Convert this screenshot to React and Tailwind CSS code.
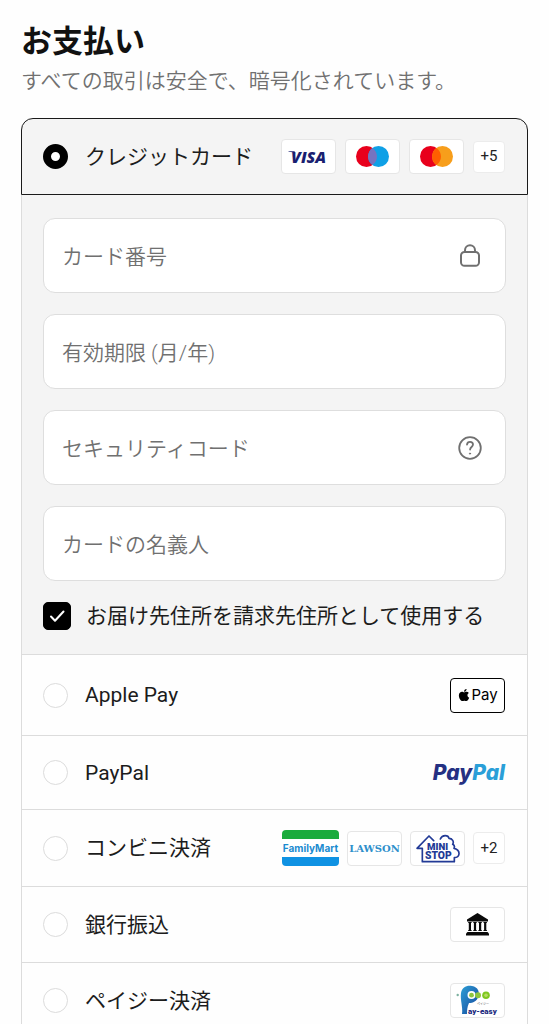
import { useState } from "react";
import { FaApple } from "react-icons/fa";

function LockIcon() {
    return (
        <svg className="size-6 shrink-0 text-[#707070]" viewBox="0 0 24 24" fill="none" stroke="currentColor" strokeWidth="2" aria-hidden="true">
            <rect x="3" y="8" width="18" height="13.800" rx="3.600" />
            <path d="M7 8V6.200a5 5 0 0 1 10 0v1.800" />
        </svg>
    );
}

function HelpIcon() {
    return (
        <svg className="size-6" viewBox="0 0 24 24" fill="none" stroke="currentColor" strokeWidth="1.8" strokeLinecap="round" aria-hidden="true">
            <circle cx="12" cy="12" r="10.800" />
            <path d="M9 8.600c.2-1.600 1.400-2.700 3-2.700s3 1 3 2.700c0 2.300-2.900 2.400-2.900 4.800v.2" />
            <circle cx="12" cy="17.600" r=".6" fill="currentColor" strokeWidth="1" />
        </svg>
    );
}

// white box that holds a logo
function Badge({ children }) {
    return (
        <span className="flex h-[35px] w-[55px] items-center justify-center rounded-[4px] border border-[#e6e6e6] bg-white">
            {children}
        </span>
    );
}

function MoreBadge({ count }) {
    return (
        <span className="flex h-8 w-8 items-center justify-center rounded-[4px] border border-[#ececec] bg-white text-[15px] text-[#222]">
            +{count}
        </span>
    );
}

function VisaLogo() {
    return (
        <Badge>
            <svg width="49" height="28" viewBox="0 0 49 28" role="img" aria-label="Visa">
                <text x="7" y="20" fontFamily="Open Sans, sans-serif" fontSize="16" fontWeight="800" fontStyle="italic" fill="#1a1f71">VISA</text>
                <path d="M4.500 8.300h6l1 2.200C9.500 9.200 7.500 8.800 4.500 8.700z" fill="#1a1f71" />
            </svg>
        </Badge>
    );
}

function CirclesLogo({ name, right, overlap }) {
    return (
        <Badge>
            <svg width="33" height="21" viewBox="0 0 33 21" role="img" aria-label={name}>
                <circle cx="10.5" cy="10.5" r="10.5" fill="#e8001c" />
                <circle cx="22.5" cy="10.5" r="10.5" fill={right} />
                <path d="M16.5 1.900a10.5 10.5 0 0 1 0 17.200a10.5 10.5 0 0 1 0-17.200z" fill={overlap} />
            </svg>
        </Badge>
    );
}

function ApplePayLogo() {
    return (
        <span className="flex h-[35px] w-[55px] items-center justify-center rounded-[4px] border border-black bg-white font-[Inter] text-black">
            <FaApple className="size-[14px]" />
            <span className="text-[15px]">Pay</span>
        </span>
    );
}

function PayPalLogo() {
    return (
        <span className="font-[Inter] text-[21px] font-extrabold italic text-[#253082]">
            Pay<span className="text-[#2a9fd8]">Pal</span>
        </span>
    );
}

function FamilyMartLogo() {
    return (
        <span className="flex h-9 w-[57px] flex-col items-center justify-between overflow-hidden rounded-[4px] bg-white">
            <span className="h-[9px] w-full bg-[#1aab3c]"></span>
            <span className="font-[Inter] text-[10px]/[16px] font-bold text-[#1a8bd0]">FamilyMart</span>
            <span className="h-[9px] w-full bg-[#0f92e3]"></span>
        </span>
    );
}

function LawsonLogo() {
    return (
        <Badge>
            <span className="font-['DejaVu_Serif'] text-[10px] font-bold text-[#2e8fcb]">LAWSON</span>
        </Badge>
    );
}

function MiniStopLogo() {
    return (
        <Badge>
            <svg width="44" height="29" viewBox="-1 -1 132 87" role="img" aria-label="Mini Stop">
                <path d="M16 42H2L38 5l14 14M72 14C78 0 96 2 98 12c10 0 16 10 11 18c6 3 6 8 4 12c8 1 16 8 15 17c-1 7-7 11-14 11v12H18V42" fill="none" stroke="#223a96" strokeWidth="5" strokeLinejoin="round" strokeLinecap="round" />
                <text x="64" y="46" textAnchor="middle" fontFamily="Roboto, sans-serif" fontSize="29" fontWeight="900" fill="#223a96">MINI</text>
                <text x="66" y="74" textAnchor="middle" fontFamily="Roboto, sans-serif" fontSize="31" fontWeight="900" fill="#223a96">STOP</text>
            </svg>
        </Badge>
    );
}

function BankLogo() {
    return (
        <Badge>
            <svg width="23" height="23" viewBox="0 0 23 23" fill="#0a0a0a" aria-hidden="true">
                <path d="M11.500 0L22 6.500V8.500H1V6.500z" />
                <path d="M2.200 9h3.400v1H5v7h.6v1H2.200v-1h.6v-7h-.6zM7.300 9h3.400v1h-.6v7h.6v1H7.300v-1h.6v-7h-.6zM12.400 9h3.400v1h-.6v7h.6v1h-3.400v-1h.6v-7h-.6zM17.500 9h3.400v1h-.6v7h.6v1h-3.400v-1h.6v-7h-.6z" />
                <path d="M1.500 19h20l1.500 1.500v2H0v-2z" />
            </svg>
        </Badge>
    );
}

function PayEasyLogo() {
    return (
        <Badge>
            <svg width="45" height="33" viewBox="-1 -1 45 33" role="img" aria-label="Pay-easy">
                <defs>
                    <linearGradient id="payEasyBlue" x1="0" y1="0" x2="1" y2="1">
                        <stop offset="0" stopColor="#2d9fd6" />
                        <stop offset="1" stopColor="#16459b" />
                    </linearGradient>
                </defs>
                {/* swoosh behind the green dots */}
                <path d="M6 29C7 22 4 15 5 8C6 2 11 0 16 1c6 1 8 6 6 11c-1 4-5 6-9 6c-2 4-2 8-2 11z" fill="url(#payEasyBlue)" />
                <circle cx="15.500" cy="10" r="4" fill="#fff" />
                <circle cx="1.700" cy="10" r="1.200" fill="#7db1a0" />
                <circle cx="15.500" cy="10.200" r="2.400" fill="#8dc63f" />
                <circle cx="22" cy="10.200" r="3" fill="#8dc63f" />
                <circle cx="30" cy="10.200" r="3.800" fill="#7ec820" />
                <circle cx="30" cy="10.200" r="1.800" fill="#b6dc63" />
                <text x="21" y="20" fontFamily="Noto Sans CJK JP, sans-serif" fontSize="3" fill="#444">ペイジー</text>
                <text x="12" y="28.500" fontFamily="Roboto, sans-serif" fontSize="8" fontWeight="900" fill="#1d2b80">ay-easy</text>
            </svg>
        </Badge>
    );
}

function Radio({ value, selected, onSelect }) {
    return (
        <input
            type="radio"
            name="payment"
            value={value}
            checked={selected === value}
            onChange={() => onSelect(value)}
            className="size-[25px] shrink-0 appearance-none rounded-full border border-[#dcdcdc] bg-white checked:border-8 checked:border-black"
        />
    );
}

function Field({ id, label, children }) {
    return (
        <div className="flex h-[75px] items-center rounded-[12px] border border-[#dedede] bg-white pr-[23px] pl-[18px]">
            <input id={id} type="text" aria-label={label} placeholder={label} className="h-full min-w-0 flex-1 bg-transparent pt-[2px] text-[21px] font-[350] text-[#222] outline-none placeholder:text-[#707070]" />
            {children}
        </div>
    );
}

const METHODS = [
    { value: "apple", label: "Apple Pay", height: "h-[81px]", logos: <ApplePayLogo /> },
    { value: "paypal", label: "PayPal", height: "h-[74px]", logos: <PayPalLogo /> },
    { value: "konbini", label: "コンビニ決済", height: "h-[77px]", logos: <><FamilyMartLogo /><LawsonLogo /><MiniStopLogo /><MoreBadge count={2} /></> },
    { value: "bank", label: "銀行振込", height: "h-[76px]", logos: <BankLogo /> },
    { value: "payeasy", label: "ペイジー決済", height: "h-[76px]", logos: <PayEasyLogo /> },
];

export default function App() {
    const [selected, setSelected] = useState("card");
    const [sameAddress, setSameAddress] = useState(true);

    return (
        <main className="bg-[#fefefe] px-[21px] pt-[21px] font-['Roboto','Noto_Sans_CJK_JP',sans-serif] text-[#1c1c1c]">
            <h1 className="text-[31px]/[42px] font-bold text-[#111]">お支払い</h1>
            <p className="mt-1 text-[21px]/[28px] font-[350] text-[#707070]">すべての取引は安全で、暗号化されています。</p>

            {/* credit card row */}
            <label className="mt-[23px] flex h-[77px] items-center gap-[17px] rounded-t-[12px] border border-[#1a1a1a] bg-[#f4f4f4] pr-[22px] pl-[21px]">
                <Radio value="card" selected={selected} onSelect={setSelected} />
                <span className="flex-1 pt-[2px] text-[21px]">クレジットカード</span>
                <span className="flex items-center gap-[9px]">
                    <VisaLogo />
                    <CirclesLogo name="Maestro" right="#0fa0e6" overlap="#7673c0" />
                    <CirclesLogo name="Mastercard" right="#f79e1b" overlap="#ff5f00" />
                    <MoreBadge count={5} />
                </span>
            </label>

            <div className="border-x border-[#dcdcdc]">
                {/* card form */}
                <div className="flex flex-col gap-[21px] bg-[#f4f4f4] px-[21px] pt-[23px] pb-6">
                    <Field id="number" label="カード番号">
                        <LockIcon />
                    </Field>
                    <Field id="expiry" label="有効期限 (月/年)" />
                    <Field id="cvc" label="セキュリティコード">
                        <button type="button" aria-label="ヘルプ" className="shrink-0 text-[#707070]">
                            <HelpIcon />
                        </button>
                    </Field>
                    <Field id="holder" label="カードの名義人" />
                    <label className="flex h-7 items-center gap-[15px]">
                        <span className="grid size-7 shrink-0">
                            <input
                                type="checkbox"
                                checked={sameAddress}
                                onChange={() => setSameAddress(!sameAddress)}
                                className="peer col-start-1 row-start-1 size-7 appearance-none rounded-[5px] border border-[#dcdcdc] bg-white checked:border-black checked:bg-black"
                            />
                            <svg className="pointer-events-none col-start-1 row-start-1 hidden size-7 peer-checked:block" viewBox="0 0 28 28" fill="none" stroke="#fff" strokeWidth="2" strokeLinecap="round" strokeLinejoin="round" aria-hidden="true">
                                <path d="M8 14.500l4 4.200L20.500 9.500" />
                            </svg>
                        </span>
                        <span className="pt-[2px] text-[21px]">お届け先住所を請求先住所として使用する</span>
                    </label>
                </div>

                {/* other payment methods */}
                {METHODS.map((method) => (
                    <label key={method.value} className={`flex items-center gap-[17px] border-t border-[#dcdcdc] pr-[22px] pl-[21px] ${method.height}`}>
                        <Radio value={method.value} selected={selected} onSelect={setSelected} />
                        <span className="flex-1 pt-[2px] text-[21px]">{method.label}</span>
                        <span className="flex items-center gap-2">{method.logos}</span>
                    </label>
                ))}
            </div>
        </main>
    );
}
